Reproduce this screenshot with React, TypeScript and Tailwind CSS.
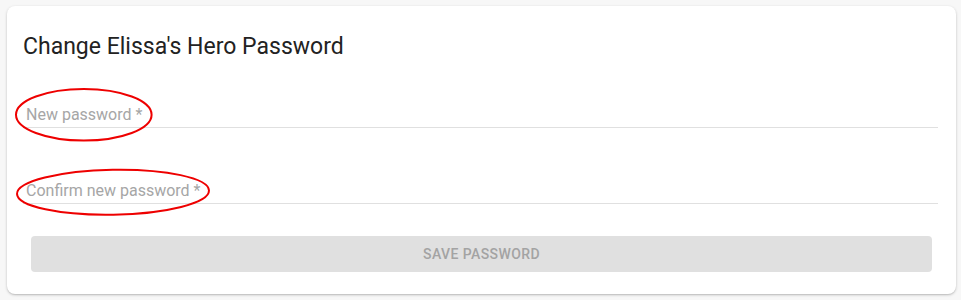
import React from "react";

export default function App() {
  return (
    <div
      className="relative w-[961px] h-[300px] bg-[#f7f7f7] pt-[6px] pl-[7px]"
      style={{ fontFamily: "Roboto, 'Liberation Sans', sans-serif" }}
    >
      <div className="w-[949px] h-[288px] bg-white rounded-lg shadow-[0_1px_3px_rgba(0,0,0,0.2),0_1px_1px_rgba(0,0,0,0.08)] pl-4 pr-[18px] pt-[25px]">
        <h2 className="text-[23px] leading-[32px] text-[#222222] font-normal">
          Change Elissa's Hero Password
        </h2>
        <div className="mt-[40px] border-b border-[#e0e0e0] pl-[3px]">
          <div className="text-[16px] leading-[24px] text-[#a6a6a6]">New password *</div>
        </div>
        <div className="mt-[51px] border-b border-[#e0e0e0] pl-[3px]">
          <div className="text-[16px] leading-[24px] text-[#a6a6a6]">Confirm new password *</div>
        </div>
        <div className="mt-[32px] pl-2 pr-[6px]">
          <button
            disabled
            className="w-full h-9 rounded bg-[#e0e0e0] text-[14px] font-medium tracking-[0.4px] text-[#a3a3a3] uppercase"
          >
            Save password
          </button>
        </div>
      </div>
      <svg
        className="absolute left-0 top-0 pointer-events-none"
        width="961"
        height="300"
        viewBox="0 0 961 300"
      >
        <ellipse cx="83.8" cy="114.8" rx="67.8" ry="25.8" fill="none" stroke="#ee0000" strokeWidth="2" />
        <ellipse cx="113" cy="192.2" rx="96" ry="22.5" fill="none" stroke="#ee0000" strokeWidth="2" transform="rotate(-1 113 192.2)" />
      </svg>
    </div>
  );
}
